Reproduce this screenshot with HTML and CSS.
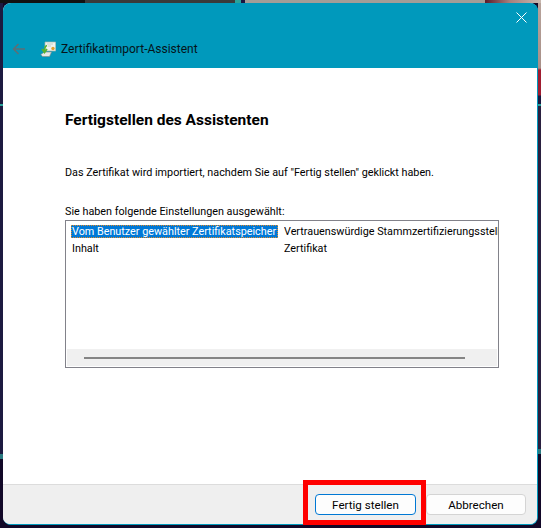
FILE: index.html
```html
<!DOCTYPE html>
<html lang="de">
<head>
  <meta charset="UTF-8">
  <title>Zertifikatimport-Assistent</title>
  <link rel="stylesheet" href="styles.css">
</head>
<body>
  <div class="window">
    <div class="header">
      <button class="close" aria-label="Schließen">
        <svg width="11" height="11" viewBox="0 0 11 11"><path d="M0.5 0.5 L10.5 10.5 M10.5 0.5 L0.5 10.5" stroke="#fff" stroke-width="1" fill="none"/></svg>
      </button>
      <div class="title-row">
        <svg class="back" width="14" height="12" viewBox="0 0 14 12"><path d="M13 6 H1.5 M6.5 1 L1.5 6 L6.5 11" stroke="#5f6e74" stroke-width="1.5" fill="none"/></svg>
        <svg class="wizard-icon" width="16" height="16" viewBox="0 0 16 16">
          <path d="M5 1 H15.7 V10 H5 Z" fill="#eef3ee" stroke="#a3b5aa" stroke-width="0.7"/>
          <path d="M7 3 H13 M8 5 H11" stroke="#c2d0c8" stroke-width="1"/>
          <circle cx="13" cy="7.5" r="1.7" fill="#e0a030"/>
          <path d="M0.8 13.5 L4.5 11 H11.5 L9.5 15.5 H2.5 Z" fill="#e6e9e6" stroke="#7f8a86" stroke-width="0.6"/>
          <path d="M7 4.5 C5 5 4.5 6.5 4.5 10 M2 8 L4.5 11.5 L7 8" stroke="#58b030" stroke-width="1.7" fill="none"/>
        </svg>
        <span class="title">Zertifikatimport-Assistent</span>
      </div>
    </div>

    <div class="content">
      <h1>Fertigstellen des Assistenten</h1>
      <p class="intro">Das Zertifikat wird importiert, nachdem Sie auf "Fertig stellen" geklickt haben.</p>
      <div class="list-label">Sie haben folgende Einstellungen ausgewählt:</div>
      <div class="list">
        <div class="rows">
          <div class="row">
            <span class="col-a selected">Vom Benutzer gewählter Zertifikatspeicher</span>
            <span class="col-b">Vertrauenswürdige Stammzertifizierungsstellen</span>
          </div>
          <div class="row">
            <span class="col-a">Inhalt</span>
            <span class="col-b">Zertifikat</span>
          </div>
        </div>
        <div class="scrollbar"><div class="thumb"></div></div>
      </div>
    </div>

    <div class="footer">
      <button class="btn btn-primary">Fertig stellen</button>
      <button class="btn btn-cancel">Abbrechen</button>
      <div class="highlight"></div>
    </div>
  </div>
</body>
</html>
```

FILE: styles.css
```css
html, body {
  height: 100%;
}
body {
  margin: 0;
  padding: 3px;
  box-sizing: border-box;
  /* desktop wallpaper showing round the window */
  background:
    linear-gradient(to right, #111 85px, #3a3a3a 85px, #3a3a3a 235px, #2aa39a 235px, #2aa39a 241px, #1a1540 241px, #1a1540 245px, #a39d97 245px, #a39d97 485px, #5a1a2a 485px, #a8807c 510px, #c8b8b0 541px) top / 100% 3px no-repeat,
    linear-gradient(to bottom, #b8a49c 0, #a89088 68px, #a01c30 70px, #a01c30 95px, #1a1840 96px, #1a1840 104px, #2aa39a 104px, #2aa39a 106px, #2a2040 106px, #2a2040 449px, #2a7a80 449px, #2a7a80 454px, #120828 454px) right / 3px 100% no-repeat,
    linear-gradient(to bottom, #1c1a40 0, #1c1a40 104px, #2aa39a 104px, #2aa39a 106px, #1c1a40 106px, #1c1a40 454px, #2a7a80 454px, #2a7a80 459px, #120828 459px) left / 3px 100% no-repeat,
    #120828;
  font-family: Roboto, "Noto Sans", sans-serif;
  font-size: 10.8px;
  color: #000;
  overflow: hidden;
}
.window {
  position: relative;
  width: 535px;
  height: 522px;
  box-sizing: border-box;
  display: flex;
  flex-direction: column;
  background: #fff;
  border-right: 1px solid #0099bc;
  border-bottom: 1px solid #0099bc;
  border-radius: 8px;
}
.header {
  height: 65px;
  flex: none;
  background: #0099bc;
  border-radius: 8px 8px 0 0;
  margin-right: -1px;
  display: flex;
  flex-direction: column;
  justify-content: flex-end;
}
.close {
  align-self: flex-end;
  margin: 0 11px auto 0;
  padding: 9px 0 0;
  border: 0;
  background: none;
  line-height: 0;
}
.title-row {
  display: flex;
  align-items: center;
  height: 21px;
  margin-bottom: 9px;
  padding-left: 9px;
}
.wizard-icon {
  margin-left: 14px;
}
.title {
  margin-left: 5px;
  font-size: 12px;
  color: #06141a;
}
.content {
  flex: 1;
  padding: 0 38px 0 62px;
}
h1 {
  margin: 41px 0 0;
  font-size: 15.5px;
  line-height: 22px;
  font-weight: 700;
}
.intro {
  margin: 34px 0 0;
  line-height: 16px;
}
.list-label {
  margin-top: 23px;
  line-height: 16px;
}
.list {
  height: 148px;
  border: 1px solid #82828a;
  display: flex;
  flex-direction: column;
  box-sizing: border-box;
}
.rows {
  flex: 1;
  padding-top: 4px;
  overflow: hidden;
}
.row {
  display: flex;
  height: 17px;
  line-height: 13px;
  white-space: nowrap;
}
.col-a {
  flex: none;
  width: 207px;
  height: 13px;
  margin-left: 5px;
  margin-right: 6px;
  padding-left: 1px;
  box-sizing: border-box;
}
.selected {
  background: #0078d7;
  color: #fff;
  outline: 1px dotted #e08a2a;
  outline-offset: -1px;
}
.col-b {
  flex: 1;
  min-width: 0;
  overflow: hidden;
}
.scrollbar {
  height: 17px;
  margin: 0 1px 1px;
  background: #f0f0f0;
  display: flex;
  align-items: center;
  padding: 0 32px 0 17px;
}
.thumb {
  flex: 1;
  height: 2px;
  background: #858585;
}
.footer {
  position: relative;
  height: 40px;
  flex: none;
  box-sizing: border-box;
  background: #efefef;
  border-top: 1px solid #dcdcdc;
  border-radius: 0 0 7px 7px;
  display: flex;
  justify-content: flex-end;
  align-items: flex-start;
  gap: 10px;
  padding: 9px 11px 0 0;
}
.btn {
  width: 101px;
  height: 21px;
  padding: 0;
  font: inherit;
  font-size: 11.6px;
  color: #000;
  background: #fdfdfd;
  border: 1px solid #d4d4d4;
  border-radius: 4px;
}
.btn-primary {
  border-color: #0078d4;
}
.btn-cancel {
  width: 100px;
}
.highlight {
  position: absolute;
  left: 300px;
  top: -5px;
  width: 123px;
  height: 45px;
  box-sizing: border-box;
  border: 5px solid #fe0000;
}
```
